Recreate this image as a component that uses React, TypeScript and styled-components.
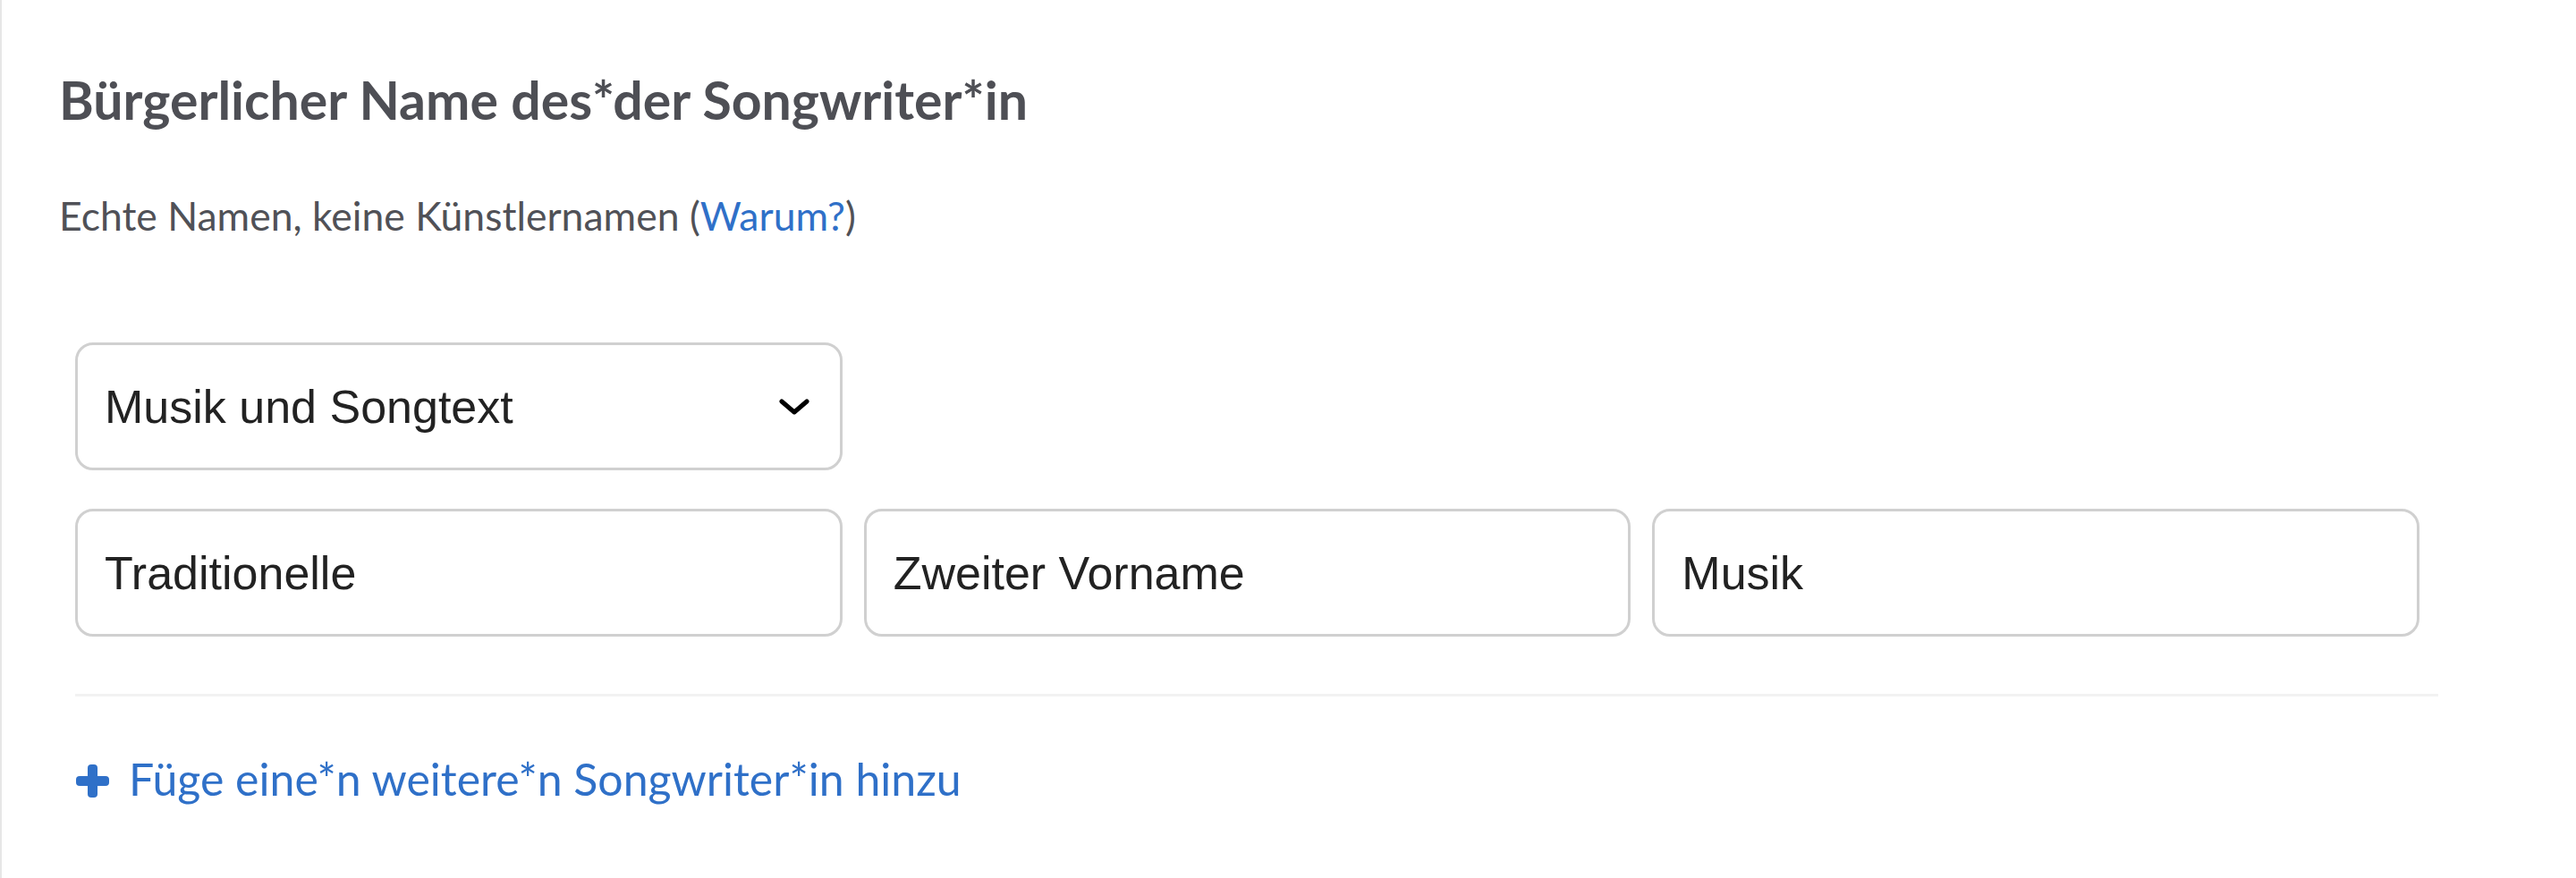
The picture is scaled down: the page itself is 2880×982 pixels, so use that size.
import React from 'react'
import styled, { createGlobalStyle } from 'styled-components'

const GlobalStyle = createGlobalStyle`
  html, body {
    margin: 0;
    padding: 0;
    background: #fff;
  }
`

const Page = styled.div`
  height: 982px;
  overflow: hidden;
  box-sizing: border-box;
  border-left: 2px solid #e6e6e6;
  padding: 76px 154px 0 64px;
  font-family: Lato, 'Noto Sans', sans-serif;
`

const Heading = styled.h2`
  margin: 0;
  font-size: 59px;
  line-height: 71px;
  font-weight: 700;
  color: #4e4f55;
`

const Hint = styled.p`
  margin: 64px 0 0;
  font-size: 44.5px;
  line-height: 60px;
  color: #505157;
`

const Link = styled.a`
  color: #2f70c8;
  text-decoration: none;
  cursor: pointer;
`

const Fields = styled.div`
  margin: 112px 0 0 18px;
  padding-right: 21px;
  display: grid;
  grid-template-columns: repeat(3, 1fr);
  column-gap: 24px;
  row-gap: 43px;
`

const Box = styled.div<{ $select?: boolean }>`
  box-sizing: border-box;
  height: 143px;
  border: 3px solid #d0d0d0;
  border-radius: 20px;
  display: flex;
  align-items: center;
  justify-content: space-between;
  padding: 0 34px 0 30px;
  font-family: 'Liberation Sans', Arial, sans-serif;
  font-size: 52px;
  line-height: 60px;
  color: #222;
  grid-column: ${p => (p.$select ? '1 / 2' : 'auto')};
  grid-row: ${p => (p.$select ? '1' : '2')};
`

const Divider = styled.hr`
  margin: 64px 0 0 18px;
  border: 0;
  height: 3px;
  background: #f2f2f2;
`

const AddButton = styled.a`
  margin: 62px 0 0 19px;
  display: flex;
  align-items: center;
  gap: 22px;
  font-size: 50px;
  line-height: 60px;
  color: #2f70c8;
  text-decoration: none;
  cursor: pointer;

  svg {
    flex: none;
    margin-top: 4px;
  }
`

function Chevron() {
  return (
    <svg width="34" height="18" viewBox="0 0 34 18">
      <path
        d="M3 3 L17 15 L31 3"
        fill="none"
        stroke="#000"
        strokeWidth="5"
        strokeLinecap="round"
        strokeLinejoin="round"
      />
    </svg>
  )
}

function PlusIcon() {
  return (
    <svg width="37" height="37" viewBox="0 0 37 37">
      <rect x="13" y="0" width="11" height="37" rx="4" fill="currentColor" />
      <rect x="0" y="13" width="37" height="11" rx="4" fill="currentColor" />
    </svg>
  )
}

export default function App() {
  return (
    <>
      <GlobalStyle />
      <Page>
        <Heading>Bürgerlicher Name des*der Songwriter*in</Heading>
        <Hint>
          Echte Namen, keine Künstlernamen (<Link>Warum?</Link>)
        </Hint>

        <Fields>
          <Box $select>
            <span>Musik und Songtext</span>
            <Chevron />
          </Box>
          <Box>Traditionelle</Box>
          <Box>Zweiter Vorname</Box>
          <Box>Musik</Box>
        </Fields>

        <Divider />

        <AddButton>
          <PlusIcon />
          Füge eine*n weitere*n Songwriter*in hinzu
        </AddButton>
      </Page>
    </>
  )
}
